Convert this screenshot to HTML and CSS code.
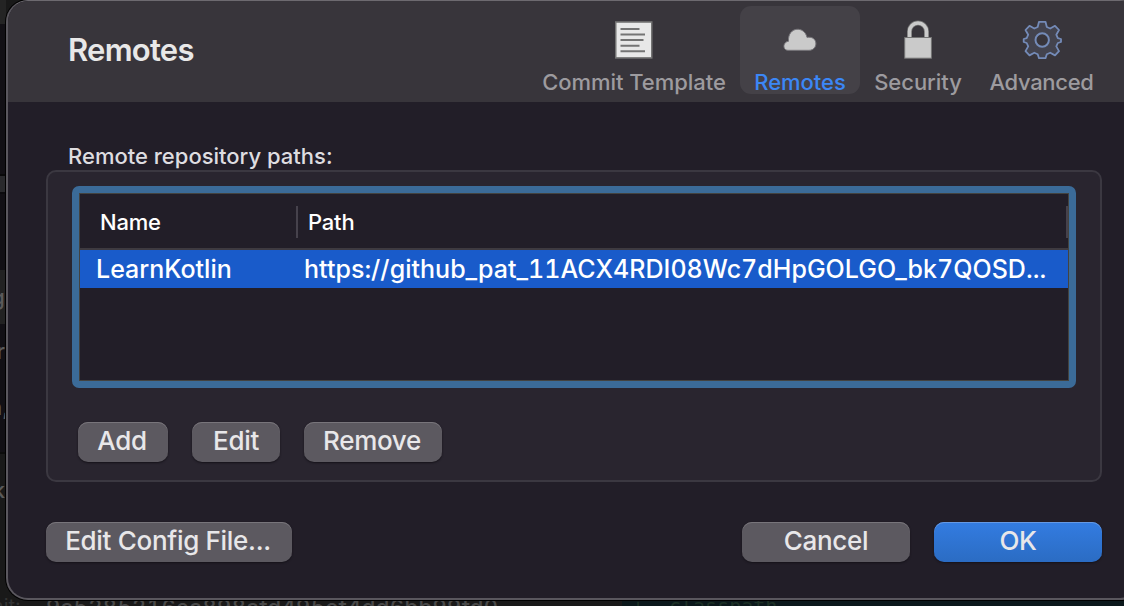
FILE: index.html
```
<!DOCTYPE html>
<html lang="en">
<head>
<meta charset="utf-8">
<title>Remotes</title>
<link rel="stylesheet" href="styles.css">
</head>
<body>
<div class="desktop">
  <div class="backdrop">
    <div class="side-strip">
      <i class="tone-a"></i><i class="tone-b"></i><i class="tone-c"></i><i class="tone-d"></i>
      <span class="sliver s-g">g</span>
      <span class="sliver s-r">r</span>
      <span class="sliver s-h">n,</span>
      <span class="sliver s-k">k</span>
    </div>
    <div class="teal"></div>
    <span class="behind b-commit">Commit:</span>
    <span class="behind b-hash">9a5285216ea898afd495cf4dd6bb99fd0</span>
    <span class="behind b-plus">+</span>
    <span class="behind b-class">classpath</span>
  </div>
  <main class="dialog">
    <header class="toolbar">
      <h1 class="title">Remotes</h1>
      <nav class="tabs">
        <div class="tab tab-template">
          <svg class="icon" viewBox="0 0 40 40"><rect x="1" y="1.200" width="37.500" height="37.500" fill="#747474"/><rect x="2.500" y="2.800" width="34.500" height="34.300" fill="#e8e8e8"/><path d="M6.500 9H25.500M6.500 14.500H31M6.500 20H29.500M6.500 25.700H25.500M6.500 31.300H31" stroke="#747474" stroke-width="2"/></svg>
          <span class="label">Commit Template</span>
        </div>
        <div class="tab tab-remotes active">
          <svg class="icon" viewBox="0 0 40 40"><path d="M8 30.300C2.500 30.300 2.500 22 8.500 21.300C7.500 6.500 24.500 5.500 27 17.400C38.500 15.500 38.500 30.300 29 30.300Z" fill="#cacaca" stroke="#77757a" stroke-width="1"/></svg>
          <span class="label">Remotes</span>
        </div>
        <div class="tab tab-security">
          <svg class="icon" viewBox="0 0 40 40"><path d="M11.500 18V11.500a8.500 8.500 0 0 1 17 0V18" fill="none" stroke="#747474" stroke-width="5"/><path d="M11.500 18V11.500a8.500 8.500 0 0 1 17 0V18" fill="none" stroke="#cacaca" stroke-width="3.500"/><rect x="6.700" y="17.500" width="26.700" height="20.700" fill="#cacaca" stroke="#747474"/></svg>
          <span class="label">Security</span>
        </div>
        <div class="tab tab-advanced">
          <svg class="icon" viewBox="0 0 40 40"><path d="M17 1.800h6.500l1.300 5.200 3.400 1.500 4.800-2.700 4 4.200-2.700 4.700 1.500 3.500 3.200.8v3l-3.200 1-1.500 3.400 2.700 4.700-4 4.300-4.800-2.700-3.400 1.500-1.300 4H17l-1.300-4-3.400-1.500-4.800 2.700-4-4.300 2.700-4.700-1.500-3.400-3-1v-3l3-.8 1.500-3.500L3.500 10l4-4.200 4.800 2.700L15.700 7Z" fill="#43434e" stroke="#748bb8" stroke-width="1.800" stroke-linejoin="round"/><circle cx="20.200" cy="20" r="6.700" fill="#38353b" stroke="#748bb8" stroke-width="2"/></svg>
          <span class="label">Advanced</span>
        </div>
      </nav>
    </header>
    <section class="content">
      <p class="caption">Remote repository paths:</p>
      <div class="group">
        <div class="table">
          <div class="thead"><span class="th-name">Name</span><span class="th-path">Path</span></div>
          <div class="row"><span class="td-name">LearnKotlin</span><span class="td-path">https://github_pat_11ACX4RDI08Wc7dHpGOLGO_bk7QOSD...</span></div>
        </div>
        <div class="actions">
          <button class="btn add">Add</button>
          <button class="btn edit">Edit</button>
          <button class="btn remove">Remove</button>
        </div>
      </div>
      <footer class="footer">
        <button class="btn config">Edit Config File...</button>
        <button class="btn cancel">Cancel</button>
        <button class="btn ok">OK</button>
      </footer>
    </section>
  </main>
</div>
</body>
</html>
```
FILE: styles.css
```
* { box-sizing: border-box; }
body { margin: 0; background: #191919; font-family: Inter, sans-serif; }
.desktop { position: relative; width: 1124px; height: 606px; overflow: hidden; }
.backdrop { position: absolute; inset: 0; background: #191919; }
.side-strip { display: flex; flex-direction: column; width: 6px; height: 606px; }
.tone-a { height: 24px; background: #242424; }
.tone-b { height: 246px; background: linear-gradient(#121015 150px, #09090a 150px 152px, #29292c 152px 168px, #0c0b0e 168px 170px, #121015 170px); }
.tone-c { height: 54px; background: #222; }
.tone-d { height: 130px; background: #121015; border-bottom: 2px solid #0c0c0c; }
.sliver { position: absolute; display: flex; justify-content: flex-end; width: 5px; color: #5a5a5a; font-size: 22px; line-height: 26px; font-weight: 500; }
.s-g { top: 284px; } .s-r { top: 338px; } .s-h { top: 394px; width: 9px; } .s-k { top: 477px; }
.teal { position: absolute; left: 622px; right: 0; top: 596px; bottom: 0; background: #0b181b; }
.behind { position: absolute; top: 596px; line-height: 20px; font: 20px/20px "DejaVu Sans Mono", monospace; white-space: pre; }
.b-commit { left: -58px; color: #333; font: 20px/20px Inter, sans-serif; }
.b-hash { left: 46px; color: #494949; font: 500 22px/22px Inter, sans-serif; letter-spacing: .39px; font-variant-numeric: tabular-nums; }
.b-plus { left: 632px; color: #1c3025; }
.b-class { left: 669px; color: #1c3025; }
.dialog { position: relative; margin-left: 6px; width: 1136px; height: 600px; overflow: hidden; background: #221e28; border: 2px solid #5a575e; border-top-width: 1px; border-top-color: #6d6a70; border-radius: 22px; box-shadow: 0 0 0 1px #000; }
.toolbar { display: flex; justify-content: space-between; height: 101px; background: #38353b; }
.title { margin: 32px 0 0 60px; font-size: 31px; line-height: 34px; font-weight: 600; letter-spacing: -.75px; color: #e8e8e8; }
.tabs { display: flex; margin-right: 33px; padding-top: 5px; }
.tab { display: flex; flex-direction: column; align-items: center; height: 88px; padding-top: 14px; border-radius: 11px; color: #9d9b9f; }
.icon { flex: none; width: 40px; height: 40px; }
.label { flex: none; margin-top: 8px; font-size: 22px; font-weight: 450; line-height: 28px; letter-spacing: -.05px; white-space: nowrap; }
.tab-template { width: 212px; }
.tab-remotes { width: 120px; }
.tab-security { width: 116px; }
.tab-advanced { width: 131px; }
.tab-advanced .label { letter-spacing: -.3px; }
.active { background: #444147; color: #3c87f6; }
.content { padding: 40px 0 0 38px; }
.caption { margin: 0 0 0 22px; font-size: 22px; font-weight: 450; line-height: 28px; letter-spacing: 0; color: #dedde0; }
.group { width: 1056px; height: 312px; padding: 14px 24px; border: 2px solid #3b3841; border-radius: 10px; background: #29252f; }
.table { width: 1004px; height: 202px; border: 7px solid #3b6b98; border-radius: 7px; background: #221e28; box-shadow: inset 0 0 0 1px #434340; overflow: hidden; }
.thead { display: flex; align-items: center; height: 57px; margin: 0 1px; padding-top: 2px; border-bottom: 2px solid #3e3a40; font-size: 22px; font-weight: 500; letter-spacing: -.2px; color: #fff; }
.th-name { width: 218px; height: 32px; line-height: 32px; padding-left: 20px; border-right: 2px solid #46424c; }
.th-path { flex: 1; height: 32px; line-height: 32px; padding-left: 10px; border-right: 2px solid #46424c; }
.row { display: flex; height: 38px; margin: 0 1px; line-height: 38px; font-size: 25px; font-weight: 500; background: #195bca; color: #fff; white-space: nowrap; }
.td-name { width: 224px; padding-left: 16px; }
.td-path { letter-spacing: .02px; font-variant-numeric: tabular-nums; }
.actions { display: flex; gap: 24px; padding: 34px 0 0 6px; }
.btn { height: 40px; padding: 0 0 2px; border: 0; border-radius: 10px; background: #5c5960; box-shadow: inset 0 1px #78757b, 0 1px 2px #151219; font: 450 26px/36px Inter, sans-serif; letter-spacing: -.3px; color: #e8e7e9; white-space: nowrap; }
.add { width: 90px; padding-right: 2px; } .edit { width: 88px; } .remove { width: 138px; padding-right: 2px; }
.footer { display: flex; padding-top: 40px; }
.config { width: 246px; padding-right: 2px; }
.cancel { width: 168px; margin-left: 450px; }
.ok { width: 168px; margin-left: 24px; background: linear-gradient(#337ce1, #2b6cc3); box-shadow: inset 0 1px #6599e3, 0 1px 2px #151219; }
```
